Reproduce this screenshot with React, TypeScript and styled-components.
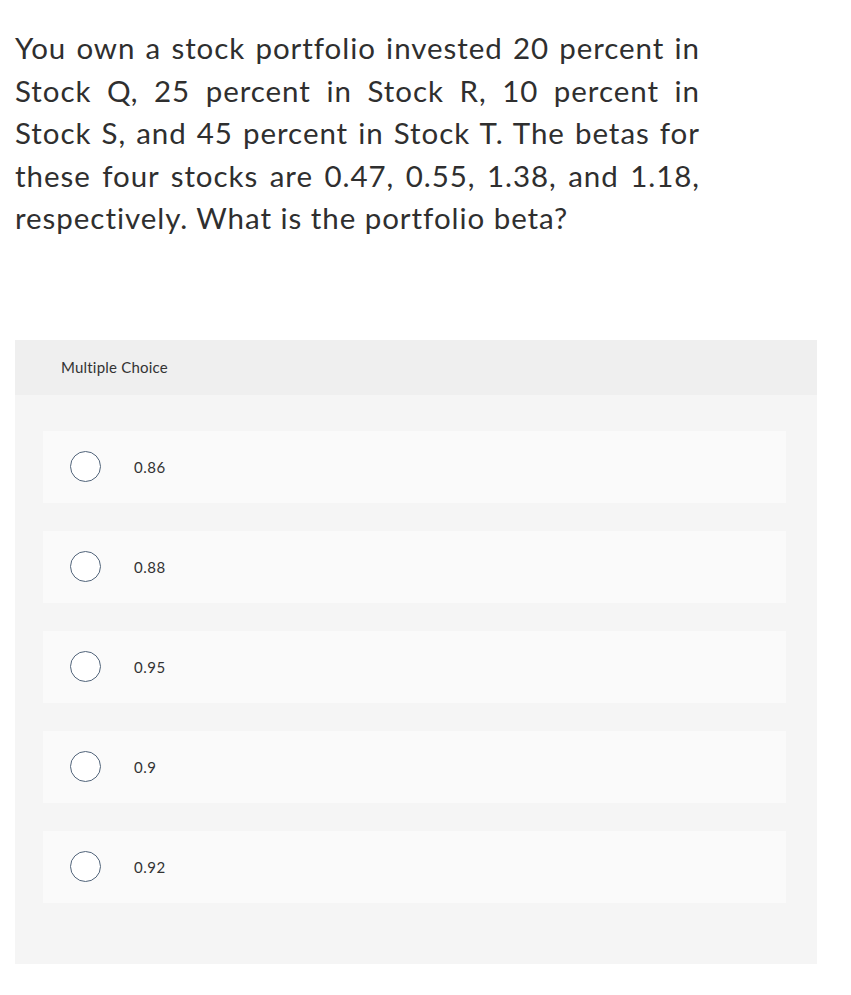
import styled, { createGlobalStyle } from 'styled-components'

const GlobalStyle = createGlobalStyle`
  html, body {
    margin: 0;
    padding: 0;
    background: #ffffff;
  }
  body {
    font-family: Lato, "Open Sans", sans-serif;
    color: #333333;
  }
`

const Page = styled.div`
  width: 851px;
  padding: 27px 0 0 15px;
  box-sizing: border-box;
`

const Question = styled.p`
  width: 685px;
  margin: 0;
  font-size: 29.5px;
  line-height: 42.5px;
  letter-spacing: 0.95px;
  text-align: justify;
  color: #2f2f2f;
`

const Panel = styled.section`
  width: 802px;
  margin-top: 100px;
  background: #f5f5f5;
  padding-bottom: 61px;
`

const PanelHeader = styled.div`
  height: 55px;
  display: flex;
  align-items: center;
  padding-left: 46px;
  background: #efefef;
  font-size: 15px;
  letter-spacing: 0.2px;
  color: #333333;
`

const OptionList = styled.div`
  display: flex;
  flex-direction: column;
  gap: 28px;
  padding: 36px 31px 0 28px;
`

const Option = styled.label`
  height: 72px;
  display: flex;
  align-items: center;
  background: #fafafa;
  padding-left: 27px;
  cursor: pointer;
`

const Radio = styled.span`
  width: 31px;
  height: 31px;
  box-sizing: border-box;
  border-radius: 50%;
  border: 1px solid #51647a;
  background: #ffffff;
  flex-shrink: 0;
`

const OptionText = styled.span`
  margin-left: 33px;
  font-size: 15px;
  letter-spacing: 0.5px;
  color: #333333;
`

const choices = ['0.86', '0.88', '0.95', '0.9', '0.92']

export default function App() {
  return (
    <>
      <GlobalStyle />
      <Page>
        <Question>
          You own a stock portfolio invested 20 percent in Stock Q, 25 percent in Stock R, 10 percent in
          Stock S, and 45 percent in Stock T. The betas for these four stocks are 0.47, 0.55, 1.38, and
          1.18, respectively. What is the portfolio beta?
        </Question>
        <Panel>
          <PanelHeader>Multiple Choice</PanelHeader>
          <OptionList>
            {choices.map((c) => (
              <Option key={c}>
                <Radio />
                <OptionText>{c}</OptionText>
              </Option>
            ))}
          </OptionList>
        </Panel>
      </Page>
    </>
  )
}
